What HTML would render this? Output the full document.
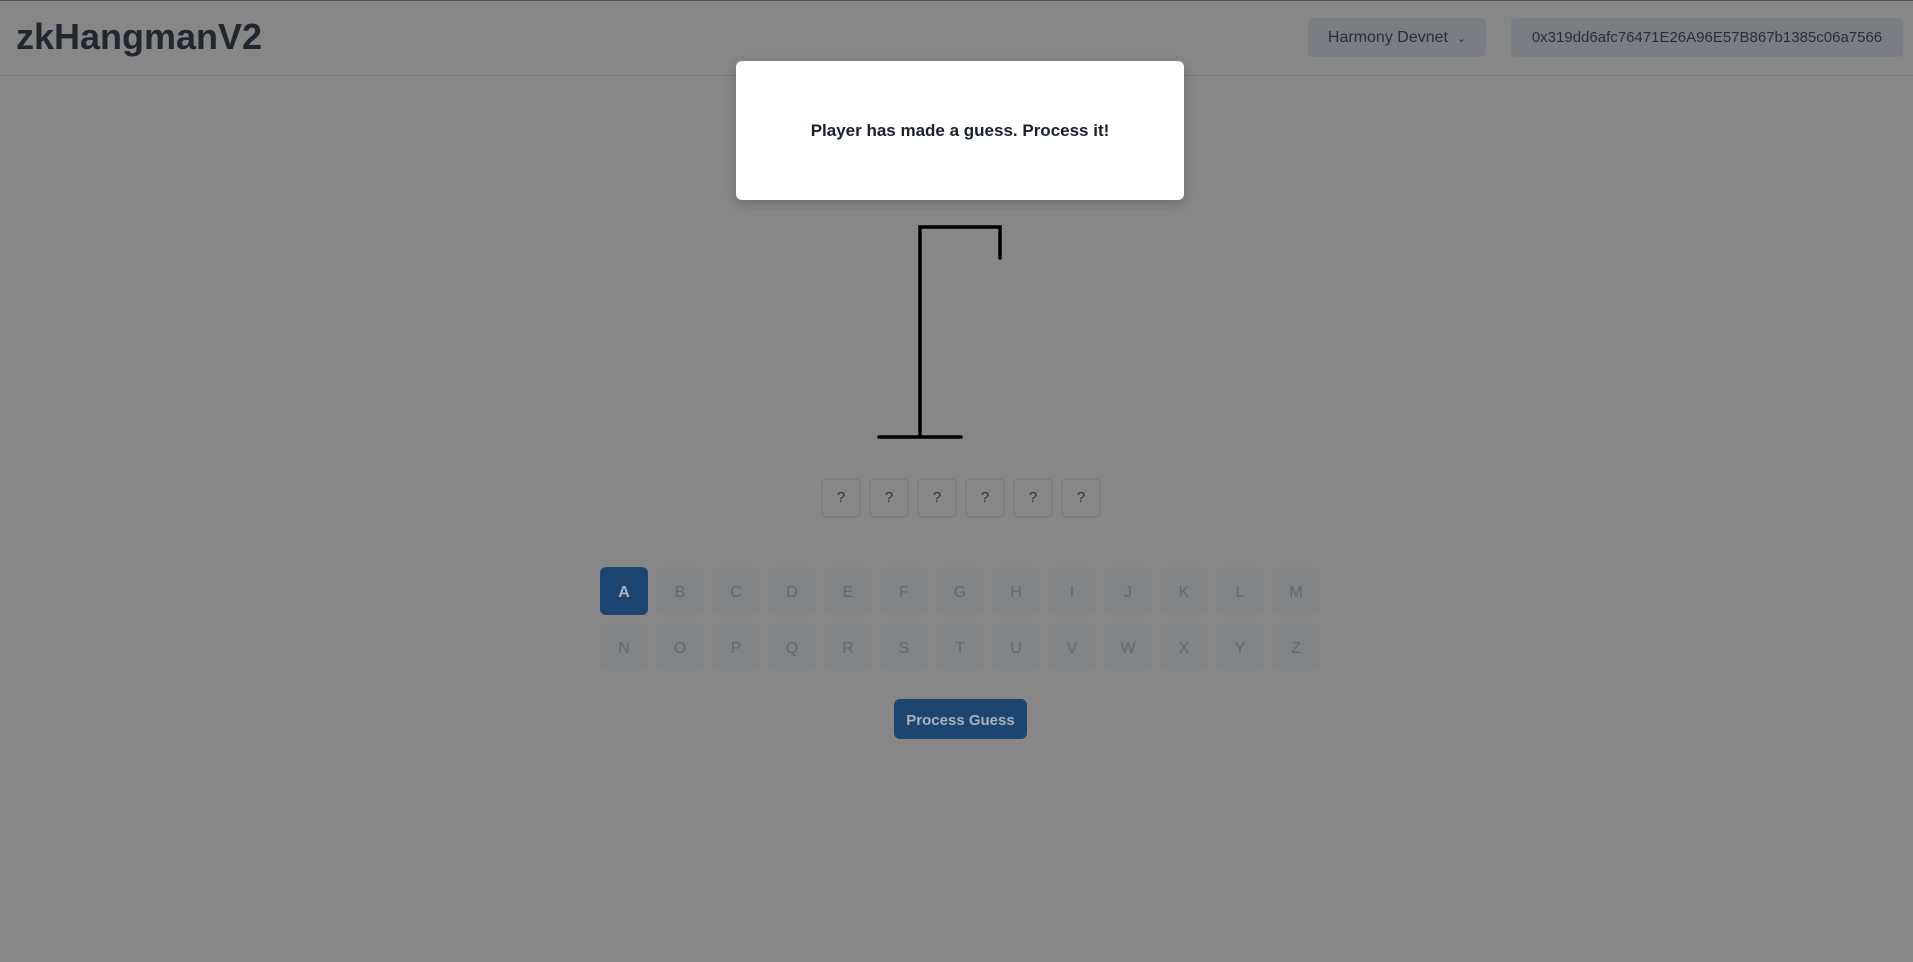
<!DOCTYPE html>
<html><head><style>
body{margin:0;width:1913px;height:962px;background:#878787;font-family:"Liberation Sans",sans-serif;position:relative;overflow:hidden}
.topline{position:absolute;left:0;top:0;width:1913px;height:1px;background:#555}
.hdr{position:absolute;left:0;top:75px;width:1913px;height:1px;background:#7a7a7a}
.title{position:absolute;left:16px;top:16px;font-size:36px;font-weight:bold;color:#22262f;letter-spacing:0px}
.btn{position:absolute;top:18px;height:39px;background:#7a7e83;border-radius:5px;color:#2a2d33;font-size:16px;line-height:39px;text-align:center}
.modal{position:absolute;left:736px;top:61px;width:448px;height:139px;background:#fff;border-radius:6px;box-shadow:0 4px 12px rgba(0,0,0,.2);text-align:center;line-height:139px;font-weight:bold;font-size:17px;color:#1a202c}
.q{position:absolute;top:478px;width:36px;height:36px;border:2px solid #7c7e82;border-radius:5px;text-align:center;line-height:36px;font-size:15px;color:#333}
.k{position:absolute;width:48px;height:48px;background:#828384;border-radius:6px;text-align:center;line-height:52px;font-size:16px;color:#66696e}
.k.a{background:#1c4570;color:#aab5c3;font-weight:bold}
.pg{position:absolute;left:894px;top:699px;width:133px;height:40px;background:#1c4570;border-radius:6px;color:#a7b2c0;font-weight:bold;font-size:15px;text-align:center;line-height:43px}
</style></head><body>
<div class="topline"></div>
<div class="title">zkHangmanV2</div>
<div class="btn" style="left:1308px;width:178px">Harmony Devnet &nbsp;<span style="font-size:11px">&#8964;</span></div>
<div class="btn" style="left:1511px;width:392px;font-size:15px">0x319dd6afc76471E26A96E57B867b1385c06a7566</div>
<div class="hdr"></div>
<svg style="position:absolute;left:0;top:0" width="1913" height="962">
<path d="M920 437 V227 H1000 V258 M879 437 H961" fill="none" stroke="#000" stroke-width="3.5" stroke-linecap="round"/>
</svg>
<div class="q" style="left:821px">?</div>
<div class="q" style="left:869px">?</div>
<div class="q" style="left:917px">?</div>
<div class="q" style="left:965px">?</div>
<div class="q" style="left:1013px">?</div>
<div class="q" style="left:1061px">?</div>
<div class="k a" style="left:600px;top:567px">A</div>
<div class="k" style="left:656px;top:567px">B</div>
<div class="k" style="left:712px;top:567px">C</div>
<div class="k" style="left:768px;top:567px">D</div>
<div class="k" style="left:824px;top:567px">E</div>
<div class="k" style="left:880px;top:567px">F</div>
<div class="k" style="left:936px;top:567px">G</div>
<div class="k" style="left:992px;top:567px">H</div>
<div class="k" style="left:1048px;top:567px">I</div>
<div class="k" style="left:1104px;top:567px">J</div>
<div class="k" style="left:1160px;top:567px">K</div>
<div class="k" style="left:1216px;top:567px">L</div>
<div class="k" style="left:1272px;top:567px">M</div>
<div class="k" style="left:600px;top:623px">N</div>
<div class="k" style="left:656px;top:623px">O</div>
<div class="k" style="left:712px;top:623px">P</div>
<div class="k" style="left:768px;top:623px">Q</div>
<div class="k" style="left:824px;top:623px">R</div>
<div class="k" style="left:880px;top:623px">S</div>
<div class="k" style="left:936px;top:623px">T</div>
<div class="k" style="left:992px;top:623px">U</div>
<div class="k" style="left:1048px;top:623px">V</div>
<div class="k" style="left:1104px;top:623px">W</div>
<div class="k" style="left:1160px;top:623px">X</div>
<div class="k" style="left:1216px;top:623px">Y</div>
<div class="k" style="left:1272px;top:623px">Z</div>
<div class="pg">Process Guess</div>
<div class="modal">Player has made a guess. Process it!</div>
</body></html>
